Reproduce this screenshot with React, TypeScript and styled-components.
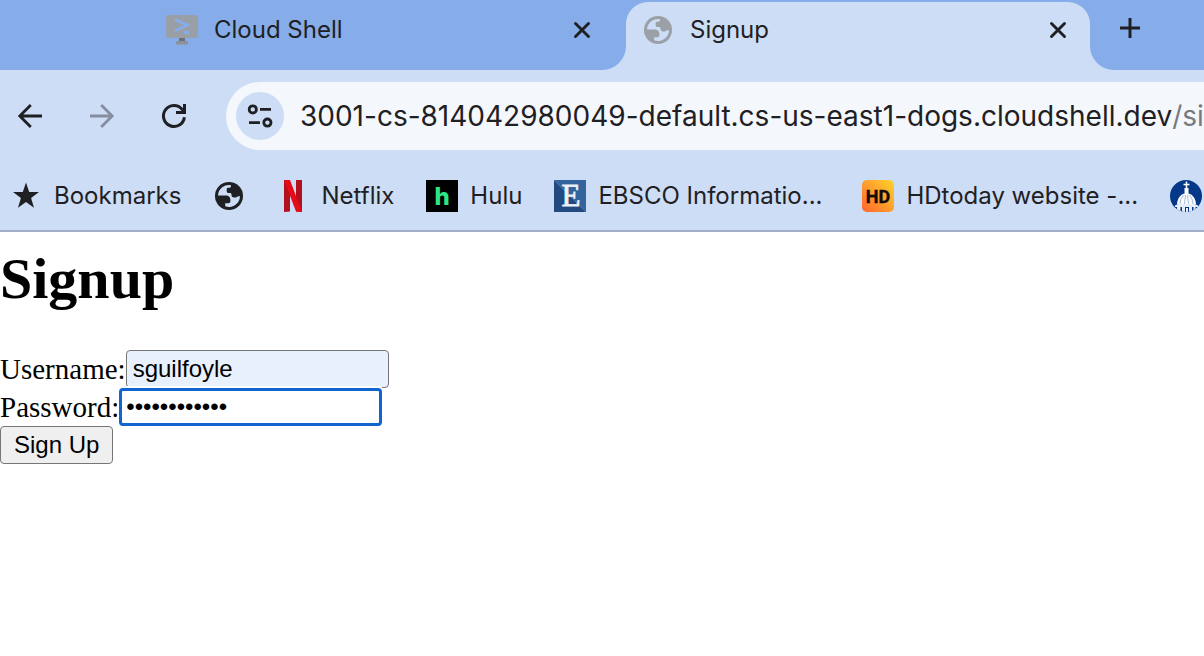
import React from "react";
import styled, { createGlobalStyle } from "styled-components";

const GlobalStyle = createGlobalStyle`
  *, *::before, *::after { box-sizing: border-box; }
  body { margin: 0; background: #fff; overflow-x: hidden; }
  button { font: inherit; color: inherit; cursor: pointer; }
`;

const ui = `"Inter", "Roboto", sans-serif`;

const Chrome = styled.header`
  background: #cdddf5;
  border-bottom: 2px solid #a2aec8;
  color: #1f2023;
  font: 24px/32px ${ui};
  overflow: hidden;
`;

const TabStrip = styled.div`
  display: flex;
  height: 70px;
`;

const Tab = styled.div<{ $active?: boolean }>`
  display: flex;
  align-items: center;
  flex: none;
  width: ${(p) => (p.$active ? 464 : 626)}px;
  padding: ${(p) => (p.$active ? "0 16px 12px 16px" : "0 28px 10px 166px")};
  background: ${(p) => (p.$active ? "#cdddf5" : "#86ade9")};
  border-radius: ${(p) => (p.$active ? "22px 22px 0 0" : "0 0 24px 0")};
`;

const ActiveSlot = styled.div`
  display: flex;
  flex: none;
  padding-top: 2px;
  background: linear-gradient(#86ade9 30px, #cdddf5 30px);
`;

const TabTitle = styled.span`
  flex: 1;
  margin-left: 16px;
`;

const StripEnd = styled.div`
  flex: 1;
  padding: 12px 24px;
  background: #86ade9;
  border-radius: 0 0 0 24px;
`;

const IconButton = styled.button<{ $size?: number }>`
  display: flex;
  align-items: center;
  justify-content: center;
  flex: none;
  width: ${(p) => p.$size ?? 32}px;
  height: ${(p) => p.$size ?? 32}px;
  padding: 0;
  border: 0;
  background: none;
  &:disabled { color: #868da0; }
`;

const Toolbar = styled.div`
  display: flex;
  align-items: center;
  gap: 24px;
  height: 92px;
  padding-left: 6px;
`;

const AddressBar = styled.div`
  display: flex;
  align-items: center;
  flex: 1;
  min-width: 0;
  height: 68px;
  margin-left: 4px;
  padding-left: 10px;
  border-radius: 34px 0 0 34px;
  background: #f4f7fc;
  font-size: 28px;
  overflow: hidden;
  white-space: nowrap;
`;

const SiteInfo = styled(IconButton)`
  margin-right: 16px;
  border-radius: 50%;
  background: #cdddf5;
`;

const AddressInput = styled.input`
  flex: none;
  field-sizing: content;
  padding: 0;
  border: 0;
  outline: 0;
  background: none;
  color: inherit;
  font: inherit;
`;

const UrlPath = styled.span`
  color: #77797d;
`;

const Bookmarks = styled.nav`
  display: flex;
  align-items: center;
  gap: 32px;
  height: 68px;
  padding-left: 10px;
`;

const Bookmark = styled.a`
  display: flex;
  align-items: center;
  flex: none;
  gap: 12px;
  color: inherit;
  text-decoration: none;
  white-space: nowrap;
`;

const BookmarkLabel = styled.span<{ $full?: boolean }>`
  width: ${(p) => (p.$full ? "232px" : "auto")};
`;

const Page = styled.main`
  color: #000;
  font: 29px/38px "Liberation Serif", serif;
`;

const Heading = styled.h1`
  margin: 0;
  padding: 15px 0 39px;
  font-size: 58px;
  line-height: 64px;
`;

const Field = styled.div`
  display: flex;
  align-items: center;
  height: 38px;
`;

const TextInput = styled.input<{ $focused?: boolean }>`
  width: 263px;
  height: 38px;
  padding: 0 ${(p) => (p.$focused ? 4 : 6)}px;
  border: ${(p) => (p.$focused ? "3px solid #1264d0" : "1px solid #767676")};
  border-radius: 4px;
  outline: 0;
  background: ${(p) => (p.$focused ? "#fff" : "#e8effd")};
  box-shadow: ${(p) => (p.$focused ? "0 0 0 2px #fff" : "none")};
  color: #000;
  font: 24px "Liberation Sans", sans-serif;
`;

const SubmitButton = styled.button`
  display: block;
  height: 38px;
  padding: 0 13px;
  border: 1px solid #767676;
  border-radius: 4px;
  background: #efefef;
  color: #000;
  font: 24px "Liberation Sans", sans-serif;
`;

const CloseIcon = () => (
  <svg width="32" height="32" viewBox="0 0 32 32" stroke="currentColor" strokeWidth="2.9" strokeLinecap="round" aria-hidden="true">
    <path d="M9.5 9.5l13 13M22.5 9.5l-13 13" />
  </svg>
);

const ArrowIcon = ({ forward }: { forward?: boolean }) => (
  <svg width="32" height="32" viewBox="0 0 32 32" fill="none" stroke="currentColor" strokeWidth="2.8" aria-hidden="true">
    <path d={forward ? "M4 16h22M15.2 5L26.2 16 15.2 27" : "M28 16H6M16.8 5L5.8 16l11 11"} />
  </svg>
);

const ReloadIcon = () => (
  <svg width="32" height="32" viewBox="0 0 32 32" fill="none" stroke="currentColor" strokeWidth="3" aria-hidden="true">
    <path d="M26.4 17.2A10.5 10.5 0 1 1 24 9.2l2.4 2.6" />
    <path d="M26.5 4v8.5H18" />
  </svg>
);

const TuneIcon = () => (
  <svg width="32" height="32" viewBox="0 0 32 32" fill="none" stroke="currentColor" strokeWidth="2.8" aria-hidden="true">
    <circle cx="8.8" cy="9.4" r="3.6" />
    <path d="M16 9.4h11M5 22.6h11" />
    <circle cx="23.4" cy="22.6" r="3.6" />
  </svg>
);

const GlobeIcon = ({ color, hole }: { color: string; hole: string }) => (
  <svg width="32" height="32" viewBox="-2 -2 32 32" aria-hidden="true">
    <circle cx="14" cy="14" r="14" fill={color} />
    <path
      fill={hole}
      d="M3 13.4A11 11 0 0 1 16 3.2V4c0 1-.8 1.8-1.8 1.8h-1c-1 0-1.5.7-1.5 1.500v2.2c0 .9.7 1.4 1.5 1.4h1.6c1.1 0 1.7.7 1.7 1.7v.5c0 1.4 1 2.3 2.300 2.300h1.900c1 0 1.700-.6 2.200-1.200h2.100A11 11 0 0 1 10.200 24.300v-3h3.200c1.200 0 2-.8 2-2v-1.600c0-2.600-1.700-4.300-4.300-4.300z"
    />
  </svg>
);

const CloudShellIcon = () => (
  <svg width="32" height="32" viewBox="0 0 32 32" aria-hidden="true">
    <rect y="1" width="32" height="23" rx="3" fill="#999fa6" />
    <path d="M13 24h6v3h-6z" fill="#6b7179" />
    <path d="M11 27h10l1 1v2.5H10V28z" fill="#8b9199" />
    <path d="M9 5.5l12.5 5.6L9 16.8M17.5 18.5H23" fill="none" stroke="#86ade9" strokeWidth="2.8" />
  </svg>
);

const StarIcon = () => (
  <svg width="32" height="32" viewBox="0 0 32 32" aria-hidden="true">
    <path fill="currentColor" d="M16 2.5l3.2 9.4 9.8.1-7.9 6.1 2.9 9.7-8-5.7-8 5.7 2.9-9.7L3 12l9.8-.1z" />
  </svg>
);

const NetflixIcon = () => (
  <svg width="32" height="32" viewBox="0 0 32 32" aria-hidden="true">
    <path d="M7 0h6v31.5l-6 .5zM19 0h6v32l-6-.5z" fill="#b1101c" />
    <path d="M7 0h6l12 32-6-.5z" fill="#e50b18" />
  </svg>
);

const HuluIcon = () => (
  <svg width="32" height="32" viewBox="0 0 32 32" aria-hidden="true">
    <path d="M0 0h32v32H0z" fill="#000" />
    <text x="16" y="25" textAnchor="middle" fontFamily="Inter, sans-serif" fontWeight="800" fontSize="24" fill="#2ce683">h</text>
  </svg>
);

const EbscoIcon = () => (
  <svg width="32" height="32" viewBox="0 0 32 32" aria-hidden="true">
    <path d="M0 0h32v32z" fill="#34649d" />
    <path d="M0 0l32 32H0z" fill="#224a80" />
    <text x="17" y="26" textAnchor="middle" fontFamily="Liberation Serif, serif" fontSize="31" fill="#edf1f7" stroke="#edf1f7" strokeWidth="0.8">E</text>
  </svg>
);

const HdIcon = () => (
  <svg width="32" height="32" viewBox="0 0 32 32" aria-hidden="true">
    <defs>
      <linearGradient id="hd" x1="0" y1="1" x2="1" y2="0">
        <stop offset="0" stopColor="#ff642c" />
        <stop offset="0.5" stopColor="#ff9e2c" />
        <stop offset="1" stopColor="#ffd32c" />
      </linearGradient>
    </defs>
    <rect width="32" height="32" rx="5" fill="url(#hd)" />
    <text x="16" y="23" textAnchor="middle" fontFamily="Roboto, sans-serif" fontWeight="700" fontSize="18" fill="#140d06" stroke="#140d06" strokeWidth="0.4">HD</text>
  </svg>
);

const DomeIcon = () => (
  <svg width="32" height="32" viewBox="0 0 32 32" aria-hidden="true">
    <defs>
      <clipPath id="seal"><circle cx="16" cy="16" r="16" /></clipPath>
    </defs>
    <g clipPath="url(#seal)">
      <path d="M0 0h32v32H0z" fill="#06388a" />
      <path d="M16.5 1.5V12M13.5 4.5h6" stroke="#fff" strokeWidth="1.6" />
      <path d="M14.5 8h4v5.5c4.5 1.2 7 5 7.5 10.5H7c.5-5.5 3-9.3 7.5-10.5z" fill="#fff" />
      <path d="M5 25.5l3-1.5h17l3 1.5v1.5H5zM7 27h3.5v5H7zM12 27h3v5h-3zM16 28h2v4h-2zM19 27h3v5h-3zM23.5 27h2v5h-2z" fill="#e8eef8" />
      <path d="M13.5 15q-3.5 4-3.5 9M15.5 15l-1 9M17.5 15l1 9M19.5 15q3.5 4 3.5 9" fill="none" stroke="#8fa8cf" strokeWidth="0.8" />
    </g>
  </svg>
);

const bookmarks = [
  { name: "Bookmarks", label: "Bookmarks", icon: <StarIcon /> },
  { name: "Site", label: "", icon: <GlobeIcon color="#1f2023" hole="#cdddf5" /> },
  { name: "Netflix", label: "Netflix", icon: <NetflixIcon /> },
  { name: "Hulu", label: "Hulu", icon: <HuluIcon /> },
  { name: "EBSCO", label: "EBSCO Informatio...", icon: <EbscoIcon />, full: true },
  { name: "HDtoday", label: "HDtoday website -...", icon: <HdIcon />, full: true },
  { name: "University", label: "", icon: <DomeIcon /> },
];

export default function App() {
  return (
    <>
      <GlobalStyle />
      <Chrome>
        <TabStrip>
          <Tab>
            <CloudShellIcon />
            <TabTitle>Cloud Shell</TabTitle>
            <IconButton aria-label="Close tab"><CloseIcon /></IconButton>
          </Tab>
          <ActiveSlot>
            <Tab $active>
              <GlobeIcon color="#9ba0a7" hole="#cdddf5" />
              <TabTitle>Signup</TabTitle>
              <IconButton aria-label="Close tab"><CloseIcon /></IconButton>
            </Tab>
          </ActiveSlot>
          <StripEnd>
            <IconButton aria-label="New tab">
              <svg width="32" height="32" viewBox="0 0 32 32" stroke="currentColor" strokeWidth="3" aria-hidden="true">
                <path d="M16 6v20M6 16h20" />
              </svg>
            </IconButton>
          </StripEnd>
        </TabStrip>
        <Toolbar>
          <IconButton $size={48} aria-label="Back"><ArrowIcon /></IconButton>
          <IconButton $size={48} aria-label="Forward" disabled><ArrowIcon forward /></IconButton>
          <IconButton $size={48} aria-label="Reload"><ReloadIcon /></IconButton>
          <AddressBar>
            <SiteInfo $size={48} aria-label="Site information"><TuneIcon /></SiteInfo>
            <AddressInput
              type="text"
              aria-label="Address"
              defaultValue="3001-cs-814042980049-default.cs-us-east1-dogs.cloudshell.dev"
            />
            <UrlPath>/signup</UrlPath>
          </AddressBar>
        </Toolbar>
        <Bookmarks aria-label="Bookmarks">
          {bookmarks.map((b) => (
            <Bookmark key={b.name} href="#" aria-label={b.name}>
              {b.icon}
              {b.label && <BookmarkLabel $full={b.full}>{b.label}</BookmarkLabel>}
            </Bookmark>
          ))}
        </Bookmarks>
      </Chrome>
      <Page>
        <Heading>Signup</Heading>
        <form onSubmit={(e) => e.preventDefault()}>
          <Field>
            <label htmlFor="username">Username:</label>
            <TextInput id="username" type="text" defaultValue="sguilfoyle" />
          </Field>
          <Field>
            <label htmlFor="password">Password:</label>
            <TextInput id="password" type="password" defaultValue="abcdefghijkl" $focused />
          </Field>
          <SubmitButton type="submit">Sign Up</SubmitButton>
        </form>
      </Page>
    </>
  );
}
